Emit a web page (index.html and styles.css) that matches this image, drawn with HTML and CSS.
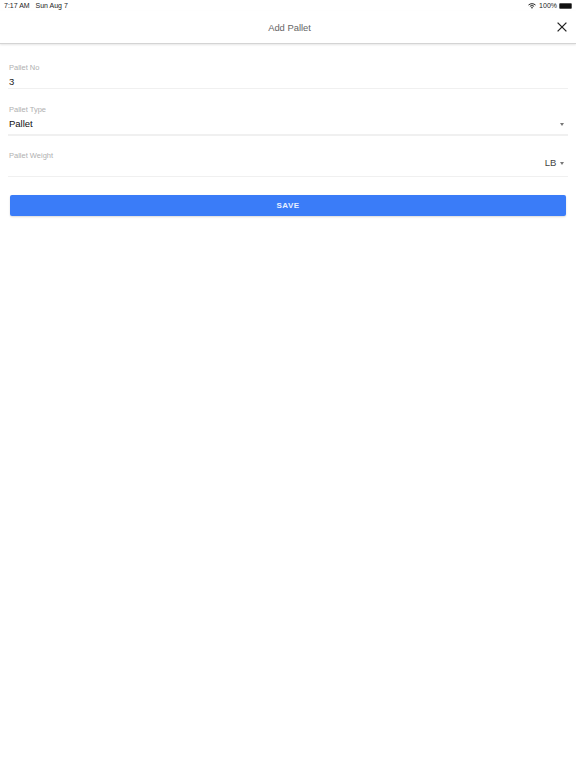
FILE: index.html
```html
<!DOCTYPE html>
<html lang="en">
<head>
  <meta charset="UTF-8">
  <meta name="viewport" content="width=device-width, initial-scale=1">
  <title>Add Pallet</title>
  <link rel="stylesheet" href="styles.css">
</head>
<body>
  <div class="status-bar">
    <span class="status-time">7:17 AM&nbsp;&nbsp; Sun Aug 7</span>
    <span class="status-right">
      <svg class="wifi" width="8" height="6" viewBox="0 0 16 12">
        <path d="M1 4 C5 0.5 11 0.5 15 4" stroke="#222" stroke-width="2" fill="none"></path>
        <path d="M3.8 6.8 C6.5 4.8 9.5 4.8 12.2 6.8" stroke="#222" stroke-width="2" fill="none"></path>
        <path d="M5.8 9 C7.2 8 8.8 8 10.2 9 L8 11.5 Z" fill="#222"></path>
      </svg>
      <span>100%</span>
      <span class="battery"><span class="battery-fill"></span></span>
    </span>
  </div>

  <header class="top-bar">
    <h1 class="title">Add Pallet</h1>
    <svg class="close-icon" width="10" height="10" viewBox="0 0 10 10">
      <path d="M0.6 0.6 L9.4 9.4 M9.4 0.6 L0.6 9.4" stroke="#222" stroke-width="1.3" fill="none"></path>
    </svg>
  </header>

  <main class="form">
    <div class="field field-no">
      <label class="field-label">Pallet No</label>
      <div class="field-value">3</div>
    </div>
    <div class="field field-type">
      <label class="field-label">Pallet Type</label>
      <div class="field-value field-select">
        <span class="selected">Pallet</span>
        <span class="caret"></span>
      </div>
    </div>
    <div class="field field-weight">
      <label class="field-label">Pallet Weight</label>
      <div class="field-value field-select">
        <span></span>
        <span class="unit">LB <span class="caret"></span></span>
      </div>
    </div>
    <button class="save-btn">SAVE</button>
  </main>
</body>
</html>
```

FILE: styles.css
```css
* {
  box-sizing: border-box;
}

body {
  margin: 0;
  height: 768px;
  background: #fff;
  font-family: "Liberation Sans", Arial, sans-serif;
  overflow: hidden;
}

.status-bar {
  height: 11px;
  padding: 0 4px;
  display: flex;
  justify-content: space-between;
  align-items: center;
  font-size: 7px;
  color: #222;
}

.status-right {
  display: flex;
  align-items: center;
  gap: 2px;
}

.wifi {
  margin-right: 1px;
}

.battery {
  width: 13px;
  height: 6px;
  border: 1px solid #555;
  border-radius: 1px;
  display: block;
}

.battery-fill {
  display: block;
  height: 100%;
  background: #111;
}

.top-bar {
  height: 33px;
  display: flex;
  align-items: center;
  justify-content: center;
  position: relative;
  border-bottom: 1px solid #d4d4d4;
  box-shadow: 0 1px 2px rgba(0,0,0,0.1);
}

.title {
  margin: 0;
  padding-left: 3px;
  font-size: 9.4px;
  font-weight: normal;
  color: #666;
}

.close-icon {
  position: absolute;
  right: 9px;
  top: 11px;
}

.form {
  padding: 0 8px;
}

.field {
  border-bottom: 1px solid #f0f0f0;
  padding-left: 1px;
}

.field-no {
  padding-top: 19px;
  height: 45px;
}

.field-type {
  height: 47px;
  padding-top: 16px;
  border-bottom-width: 2px;
}

.field-weight {
  height: 41px;
  padding-top: 15px;
}

.field-label {
  display: block;
  font-size: 7.5px;
  line-height: 9px;
  color: #b0b0b0;
}

.field-value {
  font-size: 9.5px;
  line-height: 12px;
  margin-top: 4px;
  color: #222;
}

.field-select {
  display: flex;
  justify-content: space-between;
  align-items: center;
  padding-right: 4px;
}

.selected {
  color: #111;
}

.field-weight .field-select {
  margin-top: -3px;
}

.unit {
  color: #444;
}

.caret {
  display: inline-block;
  width: 0;
  height: 0;
  margin-left: 1px;
  vertical-align: middle;
  border-left: 2.5px solid transparent;
  border-right: 2.5px solid transparent;
  border-top: 3px solid #777;
}

.save-btn {
  display: block;
  width: 556px;
  height: 21px;
  margin: 18px 0 0 2px;
  border: none;
  border-radius: 2px;
  background: #3a7cf8;
  color: #e8f0ff;
  font-family: inherit;
  font-size: 8px;
  font-weight: bold;
  letter-spacing: 0.4px;
  box-shadow: 0 1px 2px rgba(0,0,0,0.15);
}
```
